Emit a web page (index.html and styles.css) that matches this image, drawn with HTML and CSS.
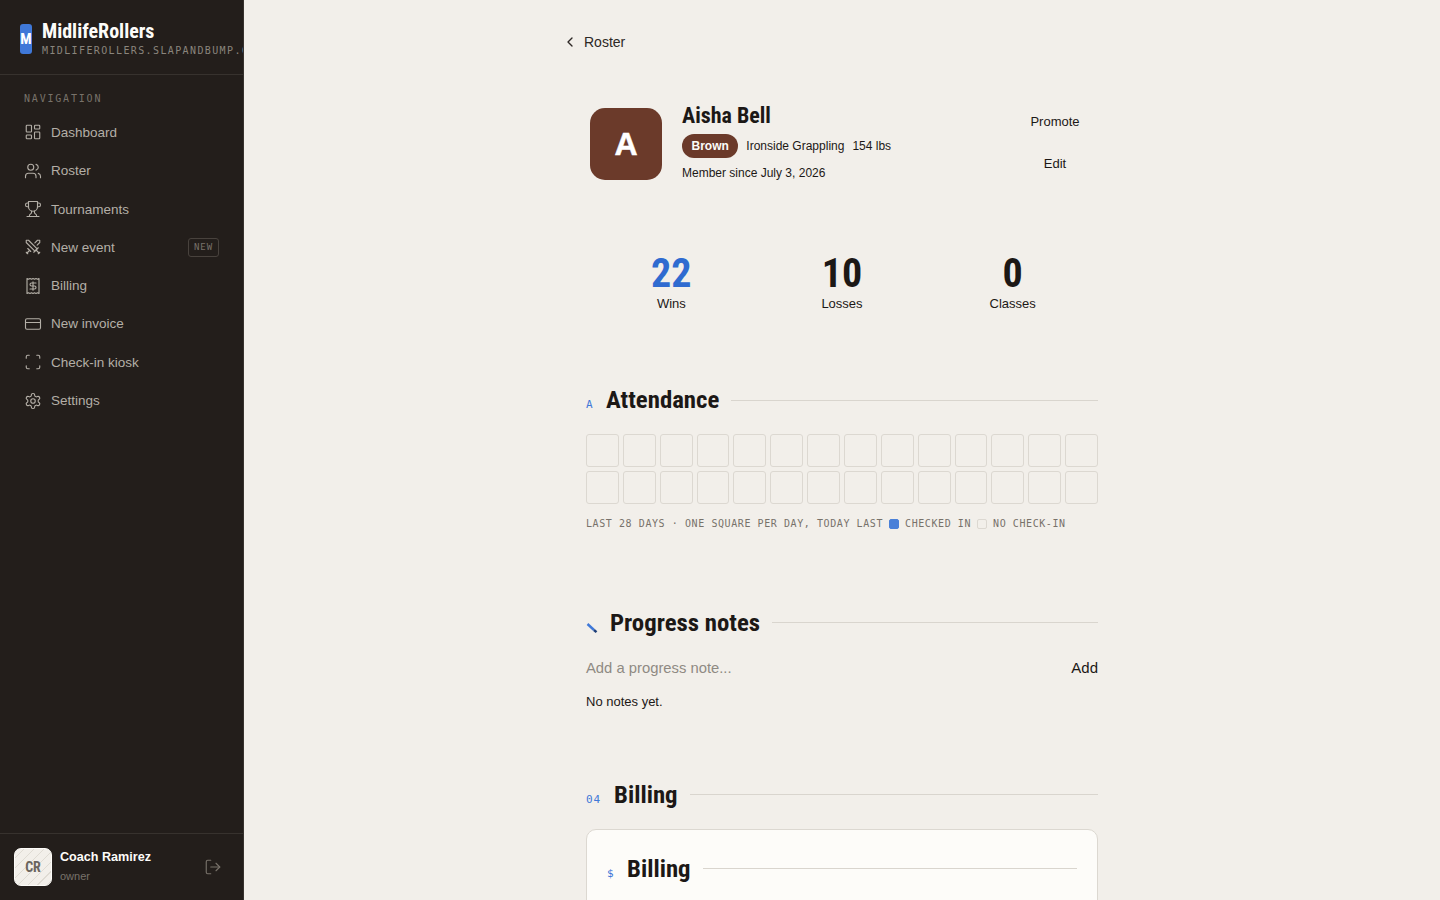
FILE: index.html
```html
<!DOCTYPE html>
<html lang="en">
<head>
  <meta charset="UTF-8">
  <title>Aisha Bell - MidlifeRollers</title>
  <link rel="stylesheet" href="styles.css">
</head>
<body>
  <aside class="sidebar">
    <div class="brand">
      <div class="brand-mark">M</div>
      <div class="brand-text">
        <div class="brand-name">MidlifeRollers</div>
        <div class="brand-host">MIDLIFEROLLERS.SLAPANDBUMP.COM</div>
      </div>
    </div>
    <div class="nav-label">NAVIGATION</div>
    <nav class="nav">
      <a class="nav-item">
        <svg class="icon" viewBox="0 0 24 24"><rect x="3" y="3" width="7" height="9" rx="1"/><rect x="14" y="3" width="7" height="5" rx="1"/><rect x="14" y="12" width="7" height="9" rx="1"/><rect x="3" y="16" width="7" height="5" rx="1"/></svg>
        Dashboard
      </a>
      <a class="nav-item">
        <svg class="icon" viewBox="0 0 24 24"><circle cx="9" cy="7" r="4"/><path d="M16 21v-2a4 4 0 0 0-4-4H6a4 4 0 0 0-4 4v2"/><path d="M16 3.13a4 4 0 0 1 0 7.75"/><path d="M22 21v-2a4 4 0 0 0-3-3.87"/></svg>
        Roster
      </a>
      <a class="nav-item">
        <svg class="icon" viewBox="0 0 24 24"><path d="M6 9H4.5a2.5 2.5 0 0 1 0-5H6"/><path d="M18 9h1.5a2.5 2.5 0 0 0 0-5H18"/><path d="M4 22h16"/><path d="M10 14.66V17c0 .55-.47.98-.97 1.21C7.85 18.75 7 20.24 7 22"/><path d="M14 14.66V17c0 .55.47.98.97 1.21C16.15 18.75 17 20.24 17 22"/><path d="M18 2H6v7a6 6 0 0 0 12 0V2Z"/></svg>
        Tournaments
      </a>
      <a class="nav-item">
        <svg class="icon" viewBox="0 0 24 24"><path d="M14.5 17.5 3 6V3h3l11.5 11.5"/><path d="m13 19 6-6"/><path d="m16 16 4 4"/><path d="m19 21 2-2"/><path d="M14.5 6.5 18 3h3v3l-3.5 3.5"/><path d="m5 14 4 4"/><path d="m7 17-3 3"/><path d="m3 19 2 2"/></svg>
        New event
        <span class="nav-badge">NEW</span>
      </a>
      <a class="nav-item">
        <svg class="icon" viewBox="0 0 24 24"><path d="M4 2v20l2-1 2 1 2-1 2 1 2-1 2 1 2-1 2 1V2l-2 1-2-1-2 1-2-1-2 1-2-1-2 1Z"/><path d="M16 8h-6a2 2 0 1 0 0 4h4a2 2 0 1 1 0 4H8"/><path d="M12 17.5v-11"/></svg>
        Billing
      </a>
      <a class="nav-item">
        <svg class="icon" viewBox="0 0 24 24"><rect x="2" y="5" width="20" height="14" rx="2"/><path d="M2 10h20"/></svg>
        New invoice
      </a>
      <a class="nav-item">
        <svg class="icon" viewBox="0 0 24 24"><path d="M3 7V5a2 2 0 0 1 2-2h2"/><path d="M17 3h2a2 2 0 0 1 2 2v2"/><path d="M21 17v2a2 2 0 0 1-2 2h-2"/><path d="M7 21H5a2 2 0 0 1-2-2v-2"/></svg>
        Check-in kiosk
      </a>
      <a class="nav-item">
        <svg class="icon" viewBox="0 0 24 24"><path d="M12.22 2h-.44a2 2 0 0 0-2 2v.18a2 2 0 0 1-1 1.73l-.43.25a2 2 0 0 1-2 0l-.15-.08a2 2 0 0 0-2.73.73l-.22.38a2 2 0 0 0 .73 2.73l.15.1a2 2 0 0 1 1 1.72v.51a2 2 0 0 1-1 1.74l-.15.09a2 2 0 0 0-.73 2.73l.22.38a2 2 0 0 0 2.73.73l.15-.08a2 2 0 0 1 2 0l.43.25a2 2 0 0 1 1 1.73V20a2 2 0 0 0 2 2h.44a2 2 0 0 0 2-2v-.18a2 2 0 0 1 1-1.73l.43-.25a2 2 0 0 1 2 0l.15.08a2 2 0 0 0 2.73-.73l.22-.39a2 2 0 0 0-.73-2.73l-.15-.08a2 2 0 0 1-1-1.74v-.5a2 2 0 0 1 1-1.74l.15-.09a2 2 0 0 0 .73-2.73l-.22-.38a2 2 0 0 0-2.73-.73l-.15.08a2 2 0 0 1-2 0l-.43-.25a2 2 0 0 1-1-1.73V4a2 2 0 0 0-2-2z"/><circle cx="12" cy="12" r="3"/></svg>
        Settings
      </a>
    </nav>
    <div class="user">
      <div class="user-avatar">CR</div>
      <div class="user-text">
        <div class="user-name">Coach Ramirez</div>
        <div class="user-role">owner</div>
      </div>
      <svg class="icon logout" viewBox="0 0 24 24"><path d="M9 21H5a2 2 0 0 1-2-2V5a2 2 0 0 1 2-2h4"/><path d="m16 17 5-5-5-5"/><path d="M21 12H9"/></svg>
    </div>
  </aside>

  <main class="main">
    <div class="page">
      <a class="back">
        <svg class="back-icon" viewBox="0 0 24 24"><path d="m15 18-6-6 6-6"/></svg>
        Roster
      </a>

      <header class="member">
        <div class="member-avatar">A</div>
        <div class="member-info">
          <h1 class="member-name">Aisha Bell</h1>
          <div class="member-meta">
            <span class="belt">Brown</span>
            <span>Ironside Grappling</span>
            <span>154 lbs</span>
          </div>
          <div class="member-since">Member since July 3, 2026</div>
        </div>
        <div class="member-actions">
          <button class="btn">Promote</button>
          <button class="btn">Edit</button>
        </div>
      </header>

      <section class="stats">
        <div class="stat"><div class="stat-num blue">22</div><div class="stat-label">Wins</div></div>
        <div class="stat"><div class="stat-num">10</div><div class="stat-label">Losses</div></div>
        <div class="stat"><div class="stat-num">0</div><div class="stat-label">Classes</div></div>
      </section>

      <section class="block attendance">
        <div class="block-head">
          <span class="block-mark">A</span>
          <h2 class="block-title">Attendance</h2>
          <span class="block-rule"></span>
        </div>
        <div class="days" id="days"></div>
        <div class="legend">
          <span>LAST 28 DAYS · ONE SQUARE PER DAY, TODAY LAST</span>
          <span class="swatch on"></span>
          <span>CHECKED IN</span>
          <span class="swatch"></span>
          <span>NO CHECK-IN</span>
        </div>
      </section>

      <section class="block notes">
        <div class="block-head">
          <svg class="pencil" viewBox="0 0 12 12"><path d="M1.5 2 L8 8"/><path class="pencil-tip" d="M8 8 L10.5 10.2"/></svg>
          <h2 class="block-title">Progress notes</h2>
          <span class="block-rule"></span>
        </div>
        <div class="note-form">
          <span class="note-input">Add a progress note...</span>
          <span class="note-add">Add</span>
        </div>
        <p class="note-empty">No notes yet.</p>
      </section>

      <section class="block billing">
        <div class="block-head">
          <span class="block-mark wide">04</span>
          <h2 class="block-title">Billing</h2>
          <span class="block-rule"></span>
        </div>
        <div class="card">
          <div class="block-head">
            <span class="block-mark">$</span>
            <h2 class="block-title">Billing</h2>
            <span class="block-rule"></span>
          </div>
        </div>
      </section>
    </div>
  </main>

  <script>
    const days = document.getElementById('days');
    for (let i = 0; i < 28; i++) {
      const day = document.createElement('div');
      day.className = 'day';
      days.appendChild(day);
    }
  </script>
</body>
</html>
```

FILE: styles.css
```css
* {
  box-sizing: border-box;
}
body {
  margin: 0;
  height: 100vh;
  display: flex;
  overflow: hidden;
  background: #f2efea;
  color: #1c1816;
  font-family: 'Liberation Sans', Arial, sans-serif;
}
h1, h2, p {
  margin: 0;
}

/* sidebar */
.sidebar {
  width: 244px;
  flex-shrink: 0;
  height: 100vh;
  display: flex;
  flex-direction: column;
  overflow: hidden;
  background: #231e1b;
  border-right: 1px solid #37322e;
}
.brand {
  height: 75px;
  flex-shrink: 0;
  display: flex;
  align-items: center;
  gap: 10px;
  padding: 3px 0 0 20px;
  border-bottom: 1px solid #37322e;
}
.brand-mark {
  width: 12px;
  height: 30px;
  flex-shrink: 0;
  display: flex;
  align-items: center;
  justify-content: center;
  overflow: hidden;
  background: #3f78d8;
  border-radius: 3px;
  color: #fff;
  font-family: Roboto, sans-serif;
  font-stretch: 75%;
  font-size: 15px;
  font-weight: 700;
}
.brand-name {
  color: #fdfcf9;
  font-family: Roboto, sans-serif;
  font-stretch: 75%;
  font-size: 20px;
  font-weight: 700;
  line-height: 22px;
  white-space: nowrap;
}
.brand-host {
  margin-top: 2px;
  color: #8a857d;
  font-family: 'DejaVu Sans Mono', monospace;
  font-size: 10px;
  letter-spacing: 1.38px;
  line-height: 13px;
  white-space: nowrap;
}
.nav-label {
  padding: 18px 24px 0;
  color: #78726a;
  font-family: 'DejaVu Sans Mono', monospace;
  font-size: 10px;
  letter-spacing: 1.8px;
  line-height: 12px;
}
.nav {
  margin-top: 8.3px;
  display: flex;
  flex-direction: column;
  flex: 1;
}
.nav-item {
  height: 38.3px;
  display: flex;
  align-items: center;
  gap: 9px;
  padding: 0 24px;
  color: #b4afa7;
  font-size: 13.5px;
}
.icon {
  width: 18px;
  height: 18px;
  flex-shrink: 0;
  fill: none;
  stroke: currentColor;
  stroke-width: 1.5;
  stroke-linecap: round;
  stroke-linejoin: round;
}
.nav-badge {
  margin-left: auto;
  padding: 2px 5px;
  border: 1px solid #48423d;
  border-radius: 3px;
  color: #78726a;
  font-family: 'DejaVu Sans Mono', monospace;
  font-size: 9px;
  letter-spacing: 0.9px;
  line-height: 13px;
}
.user {
  height: 67px;
  flex-shrink: 0;
  display: flex;
  align-items: center;
  gap: 8px;
  padding: 0 21px 0 14px;
  border-top: 1px solid #37322e;
}
.user-avatar {
  width: 38px;
  height: 38px;
  flex-shrink: 0;
  display: flex;
  align-items: center;
  justify-content: center;
  background: repeating-linear-gradient(135deg, #f2efea 0 6px, #dfdbd3 6px 7px);
  border: 1px solid #fdfcf9;
  border-radius: 7px;
  color: #6a655e;
  font-family: Roboto, sans-serif;
  font-stretch: 75%;
  font-size: 14px;
  font-weight: 700;
}
.user-text {
  flex: 1;
  margin-top: -4px;
}
.user-name {
  color: #fdfcf9;
  font-size: 12.6px;
  font-weight: 700;
  line-height: 18px;
}
.user-role {
  margin-top: 3px;
  color: #78726a;
  font-size: 11px;
  line-height: 14px;
}
.logout {
  color: #78726a;
}

/* main column */
.main {
  flex: 1;
  height: 100vh;
  overflow: hidden;
}
.page {
  width: 512px;
  margin: 0 auto;
}
.back {
  height: 84px;
  display: flex;
  align-items: center;
  gap: 6px;
  margin-left: -24px;
  color: #2d2825;
  font-size: 14px;
}
.back-icon {
  width: 16px;
  height: 16px;
  fill: none;
  stroke: currentColor;
  stroke-width: 2;
  stroke-linecap: round;
  stroke-linejoin: round;
}
.member {
  margin-top: 24px;
  display: flex;
  gap: 20px;
  padding: 0 4px;
}
.member-avatar {
  width: 72px;
  height: 72px;
  flex-shrink: 0;
  display: flex;
  align-items: center;
  justify-content: center;
  background: #6b3a2a;
  border-radius: 15px;
  color: #fff;
  font-size: 32px;
  font-weight: 700;
  -webkit-text-stroke: 0.5px #fff;
}
.member-info {
  flex: 1;
}
.member-name {
  margin-top: -6px;
  font-family: Roboto, sans-serif;
  font-stretch: 75%;
  font-size: 22px;
  font-weight: 700;
  line-height: 28px;
}
.member-meta {
  margin-top: 4px;
  display: flex;
  align-items: center;
  gap: 8px;
  font-size: 12px;
}
.belt {
  height: 24px;
  display: flex;
  align-items: center;
  padding: 0 9.5px;
  background: #6b3a2a;
  border-radius: 12px;
  color: #fdfcf9;
  font-weight: 700;
}
.member-since {
  margin-top: 8px;
  font-size: 12px;
  line-height: 14px;
}
.member-actions {
  width: 78px;
  display: flex;
  flex-direction: column;
  margin-top: -8px;
}
.btn {
  height: 42px;
  padding: 0;
  background: none;
  border: none;
  color: #1c1816;
  font-family: inherit;
  font-size: 13px;
}
.stats {
  margin-top: 71px;
  display: grid;
  grid-template-columns: repeat(3, 1fr);
}
.stat {
  text-align: center;
}
.stat-num {
  font-family: Roboto, sans-serif;
  font-stretch: 75%;
  font-size: 40px;
  font-weight: 700;
  line-height: 38px;
}
.stat-num.blue {
  color: #2f6bd0;
}
.stat-label {
  margin-top: 3px;
  font-size: 13px;
  line-height: 16px;
}

/* sections */
.block-head {
  display: flex;
  align-items: center;
}
.block-mark {
  width: 7px;
  margin: 10px 13px 0 0;
  color: #3f78d8;
  font-family: 'DejaVu Sans Mono', monospace;
  font-size: 11px;
  letter-spacing: 0.9px;
  line-height: 12px;
  white-space: nowrap;
}
.block-mark.wide {
  width: 15px;
}
.block-title {
  font-family: Roboto, sans-serif;
  font-stretch: 75%;
  font-size: 24.8px;
  font-weight: 700;
  line-height: 32px;
  white-space: nowrap;
}
.block-rule {
  flex: 1;
  height: 1px;
  margin-left: 12px;
  background: #d9d5ce;
}
.attendance {
  margin-top: 72px;
}
.days {
  margin-top: 18px;
  display: grid;
  grid-template-columns: repeat(14, 1fr);
  gap: 4px;
}
.day {
  aspect-ratio: 1;
  border: 1px solid #dcd8d1;
  border-radius: 3px;
}
.legend {
  margin-top: 14px;
  display: flex;
  align-items: center;
  gap: 6px;
  color: #78726a;
  font-family: 'DejaVu Sans Mono', monospace;
  font-size: 10px;
  letter-spacing: 0.58px;
  line-height: 12px;
  white-space: nowrap;
}
.swatch {
  width: 10px;
  height: 10px;
  border: 1px solid #dcd8d1;
  border-radius: 2px;
}
.swatch.on {
  background: #4a80d8;
  border-color: #4a80d8;
}
.notes {
  margin-top: 77px;
}
.pencil {
  width: 12px;
  height: 12px;
  margin: 10px 12px 0 0;
  flex-shrink: 0;
  fill: none;
  stroke: #3f78d8;
  stroke-width: 2.4;
}
.pencil-tip {
  stroke: #1f3f78;
}
.note-form {
  margin-top: 20px;
  display: flex;
  justify-content: space-between;
  align-items: center;
  font-size: 15px;
  line-height: 18px;
}
.note-input {
  color: #8f8a83;
  font-size: 14.8px;
}
.note-empty {
  margin-top: 17px;
  font-size: 13px;
  line-height: 16px;
}
.billing {
  margin-top: 69px;
}
.card {
  margin-top: 18px;
  height: 200px;
  padding: 23px 20px;
  background: #fdfcf9;
  border: 1px solid #dcd8d1;
  border-radius: 10px;
}
```
